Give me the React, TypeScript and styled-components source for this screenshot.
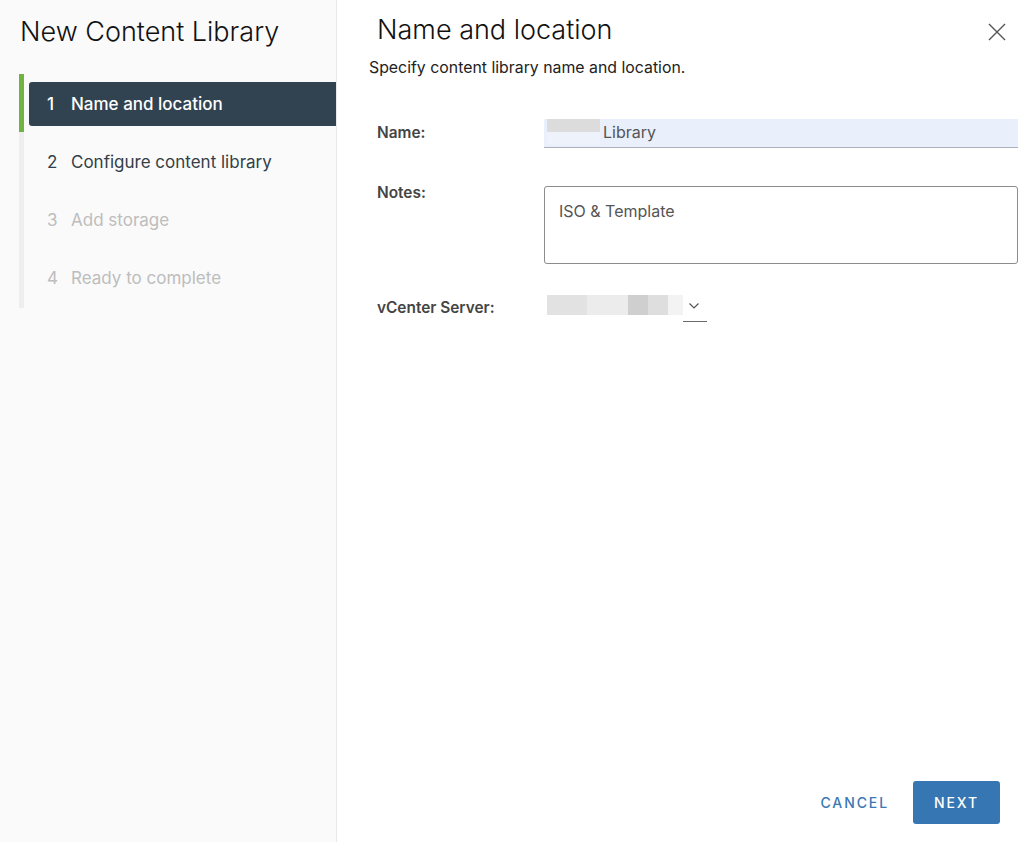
import { createGlobalStyle } from "styled-components";
import styled from "styled-components";

const GlobalStyle = createGlobalStyle`
  html, body {
    margin: 0;
    padding: 0;
    background: #ffffff;
  }
  * {
    box-sizing: border-box;
  }
`;

const Dialog = styled.div`
  display: flex;
  width: 1024px;
  height: 842px;
  overflow: hidden;
  font-family: Inter, "Liberation Sans", sans-serif;
  color: #4a4a4a;
`;

const Sidebar = styled.aside`
  flex: none;
  width: 337px;
  height: 100%;
  padding: 15px 0 0 20px;
  background: #fafafa;
  border-right: 1px solid #e8e8e8;
`;

const SidebarTitle = styled.h1`
  margin: 0 0 26px;
  height: 33px;
  font-size: 27px;
  line-height: 33px;
  font-weight: 300;
  color: #111111;
  white-space: nowrap;
`;

const Steps = styled.ol`
  display: flex;
  flex-direction: column;
  width: 317px;
  height: 234px;
  margin: 0 0 0 -1px;
  padding: 0;
  list-style: none;
  border-left: 5px solid #eeeeee;
`;

const Step = styled.li<{ $active?: boolean; $disabled?: boolean }>`
  display: flex;
  align-items: center;
  height: 58px;
  margin-left: -5px;
  padding-left: 5px;
  border-left: 5px solid ${(p) => (p.$active ? "#71b340" : "transparent")};
  font-size: 17px;
  color: ${(p) => (p.$disabled ? "#bdbdbd" : "#333f48")};
`;

const StepInner = styled.div<{ $active?: boolean }>`
  display: flex;
  align-items: center;
  flex: 1;
  height: 44px;
  margin-top: 2px;
  padding-left: 18px;
  border-radius: 3px 0 0 3px;
  background: ${(p) => (p.$active ? "#314351" : "transparent")};
  color: ${(p) => (p.$active ? "#ffffff" : "inherit")};
  font-weight: ${(p) => (p.$active ? 500 : 400)};
`;

const StepNumber = styled.span`
  width: 24px;
`;

const Main = styled.main`
  flex: 1;
  display: flex;
  flex-direction: column;
  height: 100%;
  padding: 0 6px 18px 32px;
`;

const HeaderRow = styled.header`
  display: flex;
  align-items: center;
  justify-content: space-between;
  height: 58px;
  padding: 0 12px 0 8px;
`;

const PanelTitle = styled.h2`
  margin: 0;
  font-size: 27px;
  font-weight: 300;
  color: #111111;
`;

const CloseButton = styled.button`
  display: flex;
  padding: 0;
  border: none;
  background: none;
  color: #555555;
  transform: translateY(3px);
`;

const Intro = styled.p`
  margin: 0 0 41px;
  height: 20px;
  font-size: 15.85px;
  line-height: 20px;
  color: #222222;
`;

const FormRow = styled.div<{ $gap: number }>`
  display: flex;
  margin: 0 0 ${(p) => p.$gap}px 8px;
`;

const Label = styled.label`
  flex: none;
  width: 167px;
  padding-top: 4px;
  font-size: 15.4px;
  line-height: 20px;
  font-weight: 600;
  color: #444444;
`;

const NameField = styled.div`
  flex: 1;
  display: flex;
  align-items: center;
  height: 29px;
  padding: 0 0 2px 3px;
  background: #e9effb;
  border-bottom: 1px solid #a9b2bb;
  font-size: 16px;
  color: #555555;
`;

const Redacted = styled.span`
  display: block;
  flex: none;
  align-self: flex-start;
  width: 53px;
  height: 13px;
  margin-right: 3px;
  background: #dcdcdc;
  box-shadow: 0 13px 0 #eef2fb;
`;

const NotesLabel = styled(Label)`
  margin-top: -3px;
  padding-top: 0;
`;

const NotesField = styled.div`
  flex: 1;
  height: 78px;
  padding: 14px 14px;
  border: 1px solid #8c8c8c;
  border-radius: 3px;
  background: #ffffff;
  font-size: 16px;
  line-height: 20px;
  color: #555555;
`;

const ServerLabel = styled(Label)`
  padding-top: 3px;
`;

const ServerSelect = styled.div`
  display: flex;
  align-items: flex-start;
  margin-left: 3px;
`;

const ServerBlur = styled.div`
  display: flex;
  width: 136px;
  height: 20px;
`;

const BlurPiece = styled.span<{ $w: number; $c: string }>`
  width: ${(p) => p.$w}px;
  background: ${(p) => p.$c};
`;

const Caret = styled.div`
  display: flex;
  align-items: center;
  justify-content: center;
  width: 24px;
  height: 27px;
  padding: 0 3px 5px 0;
  border-bottom: 1px solid #6b6b6b;
  color: #555555;
`;

const Footer = styled.footer`
  display: flex;
  align-items: center;
  justify-content: flex-end;
  gap: 24px;
  margin-top: auto;
  padding-right: 18px;
`;

const CancelButton = styled.button`
  padding: 0;
  border: none;
  background: none;
  font-family: inherit;
  font-size: 14px;
  font-weight: 500;
  letter-spacing: 1.9px;
  color: #3b78b4;
`;

const NextButton = styled.button`
  width: 87px;
  height: 43px;
  border: none;
  border-radius: 3px;
  background: #3677b3;
  font-family: inherit;
  font-size: 14px;
  font-weight: 500;
  letter-spacing: 1.9px;
  color: #ffffff;
`;

const steps = [
  { n: 1, label: "Name and location", active: true },
  { n: 2, label: "Configure content library" },
  { n: 3, label: "Add storage", disabled: true },
  { n: 4, label: "Ready to complete", disabled: true },
];

const blurPieces = [
  { w: 40, c: "#e2e2e2" },
  { w: 41, c: "#ececec" },
  { w: 20, c: "#cfcfcf" },
  { w: 20, c: "#dedede" },
  { w: 15, c: "#f3f3f3" },
];

export default function App() {
  return (
    <Dialog>
      <GlobalStyle />
      <Sidebar>
        <SidebarTitle>New Content Library</SidebarTitle>
        <Steps>
          {steps.map((s) => (
            <Step key={s.n} $active={s.active} $disabled={s.disabled}>
              <StepInner $active={s.active}>
                <StepNumber>{s.n}</StepNumber>
                {s.label}
              </StepInner>
            </Step>
          ))}
        </Steps>
      </Sidebar>
      <Main>
        <HeaderRow>
          <PanelTitle>Name and location</PanelTitle>
          <CloseButton aria-label="Close">
            <svg width="18" height="18" viewBox="0 0 18 18" fill="none" stroke="currentColor" strokeWidth="1.4">
              <path d="M1 1l16 16M17 1L1 17" />
            </svg>
          </CloseButton>
        </HeaderRow>
        <Intro>Specify content library name and location.</Intro>
        <FormRow $gap={38}>
          <Label>Name:</Label>
          <NameField>
            <Redacted />
            Library
          </NameField>
        </FormRow>
        <FormRow $gap={31}>
          <NotesLabel>Notes:</NotesLabel>
          <NotesField>ISO &amp; Template</NotesField>
        </FormRow>
        <FormRow $gap={0}>
          <ServerLabel>vCenter Server:</ServerLabel>
          <ServerSelect>
            <ServerBlur>
              {blurPieces.map((b, i) => (
                <BlurPiece key={i} $w={b.w} $c={b.c} />
              ))}
            </ServerBlur>
            <Caret>
              <svg width="10" height="6" viewBox="0 0 10 6" fill="none" stroke="currentColor" strokeWidth="1.2">
                <path d="M0.5 0.5L5 5l4.5-4.5" />
              </svg>
            </Caret>
          </ServerSelect>
        </FormRow>
        <Footer>
          <CancelButton>CANCEL</CancelButton>
          <NextButton>NEXT</NextButton>
        </Footer>
      </Main>
    </Dialog>
  );
}
